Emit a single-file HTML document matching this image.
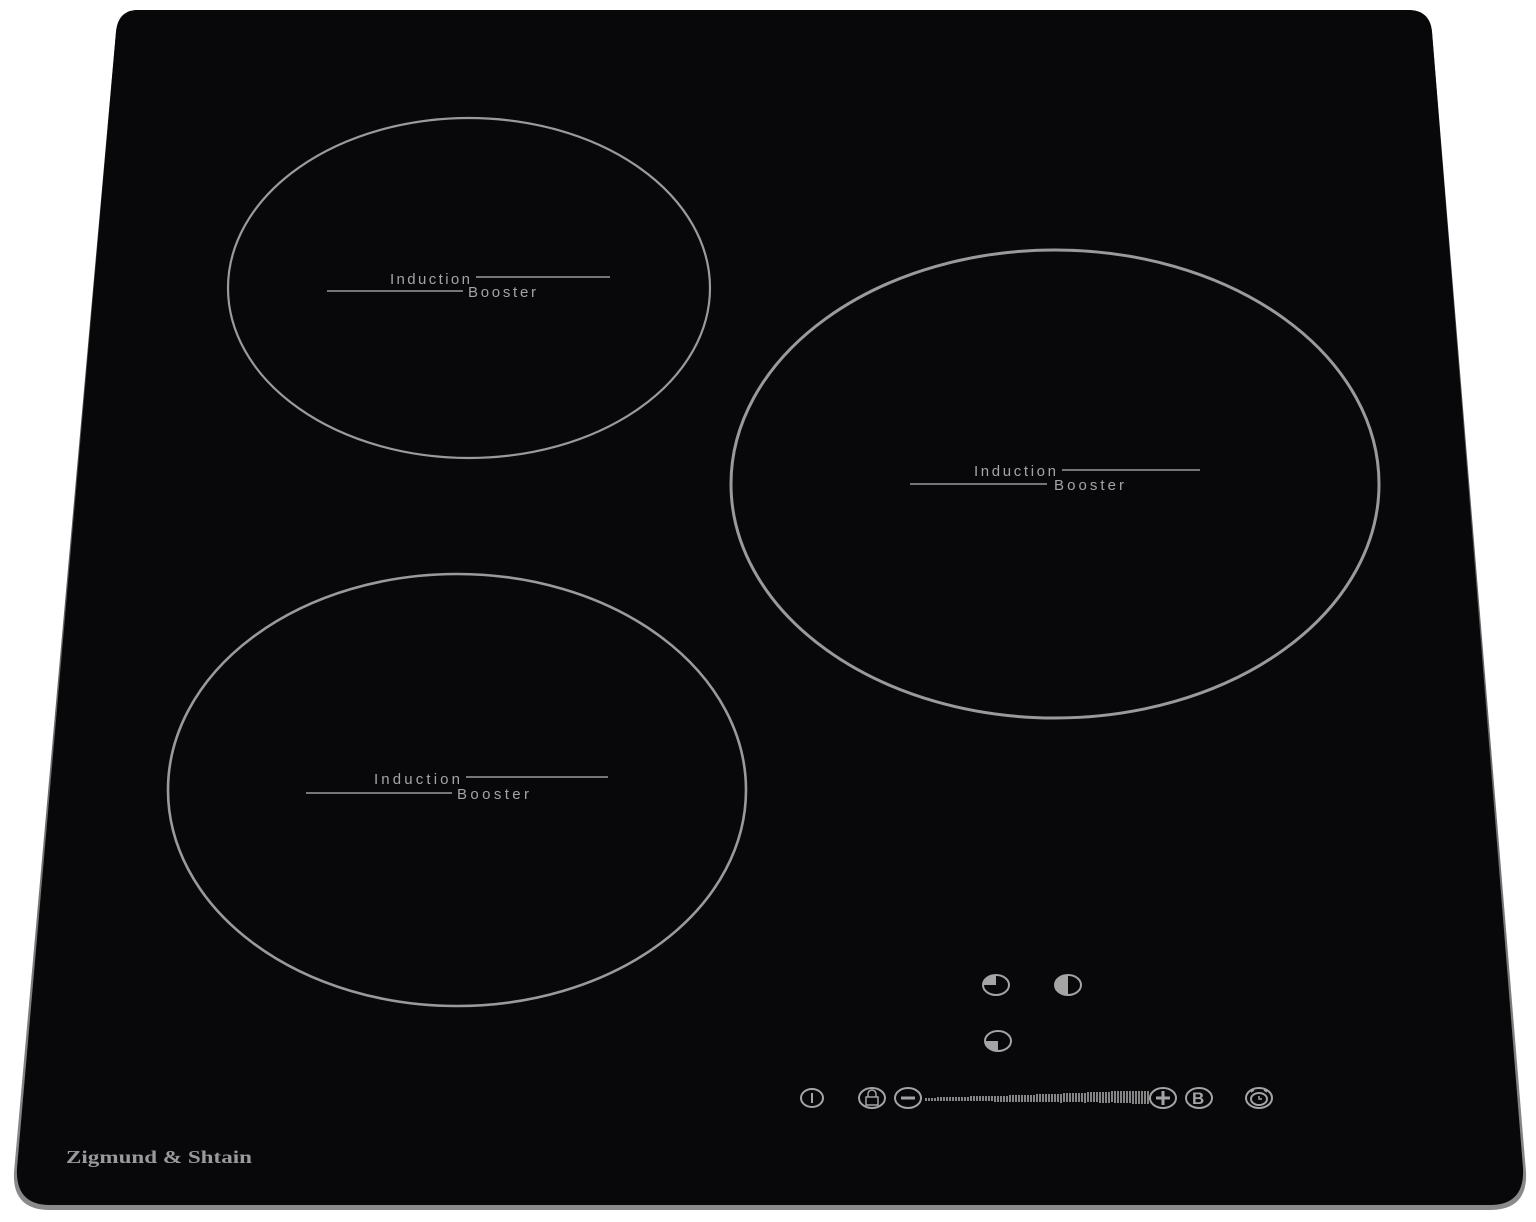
<!DOCTYPE html>
<html><head><meta charset="utf-8"><style>
html,body{margin:0;padding:0;background:#fff;width:1536px;height:1222px;overflow:hidden}
svg{display:block}
text{font-family:"Liberation Sans",sans-serif;fill:#a4a4a4}
</style></head><body>
<svg width="1536" height="1222" viewBox="0 0 1536 1222">
<defs>
<linearGradient id="edge" x1="0" y1="0" x2="0" y2="1"><stop offset="0" stop-color="#3a3a3a"/><stop offset="1" stop-color="#8a8a8a"/></linearGradient>
</defs>
<path d="M138 10 L1408 10 Q1430 10 1432 32 L1526 1172 Q1528 1210 1490 1210 L50 1210 Q12 1210 14 1172 L116 32 Q118 10 138 10 Z" fill="url(#edge)"/>
<path d="M138 10 L1408 10 Q1430 10 1432 32 L1523 1168 Q1525 1205 1490 1205 L50 1205 Q15 1205 17 1168 L116 32 Q118 10 138 10 Z" fill="#08080b"/>
<g fill="none" stroke="#9a9a9a" stroke-width="2.2">
<ellipse cx="469" cy="288" rx="241" ry="170"/>
<ellipse cx="1055" cy="484" rx="324" ry="234" stroke-width="3"/>
<ellipse cx="457" cy="790" rx="289" ry="216" stroke-width="2.6"/>
</g>
<g stroke="#9a9a9a" stroke-width="1.6">
<line x1="476" y1="277" x2="610" y2="277"/><line x1="327" y1="291" x2="463" y2="291"/>
<line x1="1062" y1="470" x2="1200" y2="470"/><line x1="910" y1="484" x2="1047" y2="484"/>
<line x1="466" y1="777" x2="608" y2="777"/><line x1="306" y1="793" x2="452" y2="793"/>
</g>
<g font-size="15">
<text x="390" y="284" textLength="80" lengthAdjust="spacing">Induction</text><text x="468" y="297" textLength="68" lengthAdjust="spacing">Booster</text>
<text x="974" y="476" textLength="82" lengthAdjust="spacing">Induction</text><text x="1054" y="490" textLength="70" lengthAdjust="spacing">Booster</text>
<text x="374" y="784" textLength="86" lengthAdjust="spacing">Induction</text><text x="457" y="799" textLength="72" lengthAdjust="spacing">Booster</text>
</g>
<text x="66" y="1163" font-size="18" font-weight="bold" textLength="186" lengthAdjust="spacingAndGlyphs" style="fill:#9a9a9a;font-family:'Liberation Serif',serif">Zigmund &amp; Shtain</text>
<g stroke="#a4a4a4" stroke-width="2" fill="none">
<ellipse cx="996" cy="985" rx="13" ry="10"/>
<ellipse cx="1068" cy="985" rx="13" ry="10"/>
<ellipse cx="998" cy="1041" rx="13" ry="10"/>
<ellipse cx="812" cy="1098" rx="11" ry="9"/>
<ellipse cx="872" cy="1098" rx="13" ry="10"/>
<ellipse cx="908" cy="1098" rx="13" ry="10"/>
<ellipse cx="1163" cy="1098" rx="13" ry="10"/>
<ellipse cx="1199" cy="1098" rx="13" ry="10"/>
<ellipse cx="1259" cy="1098" rx="13" ry="10"/>
<ellipse cx="1259" cy="1099" rx="8" ry="6"/>
<path d="M1259 1096v3h3 M1251 1092l3-2 M1267 1092l-3-2" stroke-width="1.5"/>
<line x1="812" y1="1093" x2="812" y2="1103"/>
<line x1="901" y1="1098" x2="915" y2="1098" stroke-width="3"/>
<line x1="1156" y1="1098" x2="1170" y2="1098" stroke-width="3"/>
<line x1="1163" y1="1091" x2="1163" y2="1105" stroke-width="3"/>
<rect x="866" y="1097" width="12" height="8" stroke-width="1.5"/>
<path d="M868 1097 v-3 a4 4 0 0 1 8 0 v3" stroke-width="1.5"/>
</g>
<g fill="#a4a4a4">
<path d="M996 985 L996 975 A13 10 0 0 0 983 985 Z"/>
<path d="M1068 975 A13 10 0 0 0 1068 995 Z"/>
<path d="M998 1041 L985 1041 A13 10 0 0 0 998 1051 Z"/>
</g>
<text x="1192" y="1104" font-size="17" font-weight="bold" style="fill:#a4a4a4">B</text>
<g stroke="#a4a4a4" stroke-width="1.6">
<path d="M926 1098v3 M929 1098v3 M932 1098v3 M935 1098v3 M938 1097v4 M941 1097v4 M944 1097v4 M947 1097v4 M950 1097v4 M953 1097v4 M956 1097v4 M959 1097v4 M962 1097v4 M965 1097v4 M968 1097v4 M971 1096v5 M974 1096v5 M977 1096v5 M980 1096v5 M983 1096v5 M986 1096v5 M989 1096v5 M992 1096v5 M995 1096v6 M998 1096v6 M1001 1096v6 M1004 1096v6 M1007 1096v6 M1010 1095v7 M1013 1095v7 M1016 1095v7 M1019 1095v7 M1022 1095v7 M1025 1095v7 M1028 1095v7 M1031 1095v7 M1034 1095v7 M1037 1094v8 M1040 1094v8 M1043 1094v8 M1046 1094v8 M1049 1094v8 M1052 1094v8 M1055 1094v8 M1058 1094v8 M1061 1094v9 M1064 1093v9 M1067 1093v9 M1070 1093v9 M1073 1093v9 M1076 1093v9 M1079 1093v9 M1082 1093v9 M1085 1093v10 M1088 1092v10 M1091 1092v10 M1094 1092v10 M1097 1092v10 M1100 1092v11 M1103 1092v11 M1106 1092v11 M1109 1092v11 M1112 1091v11 M1115 1091v12 M1118 1091v12 M1121 1091v12 M1124 1091v12 M1127 1091v12 M1130 1091v12 M1133 1091v13 M1136 1091v13 M1139 1091v13 M1142 1091v13 M1145 1091v13 M1148 1091v13"/>
</g>
</svg>
</body></html>
